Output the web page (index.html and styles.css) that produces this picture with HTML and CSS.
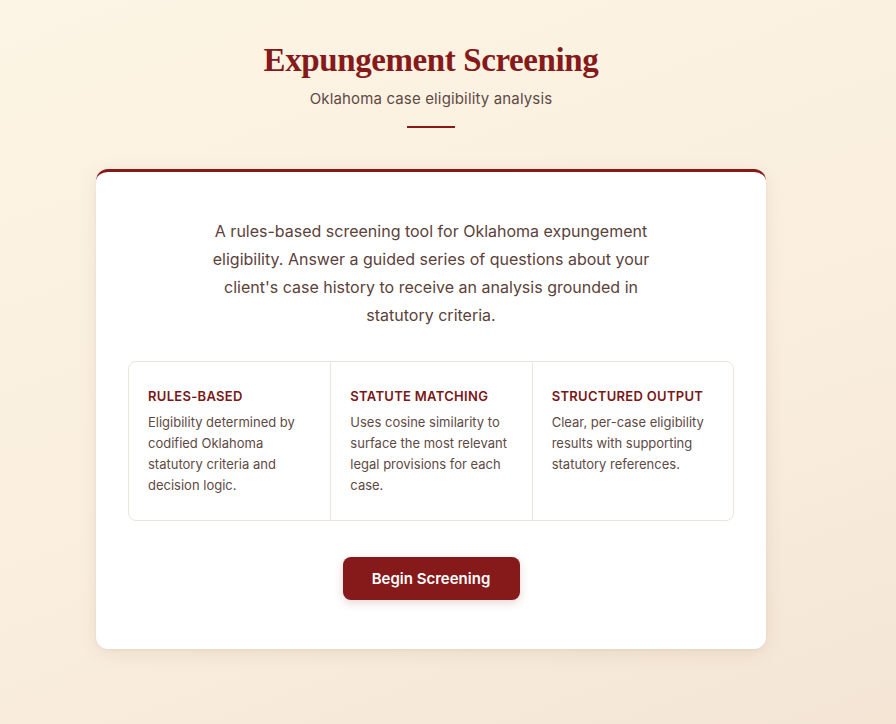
FILE: index.html
```html
<!DOCTYPE html>
<html lang="en">
<head>
<meta charset="utf-8">
<title>Expungement Screening</title>
<link rel="stylesheet" href="styles.css">
</head>
<body>
<div class="page">
  <header class="header">
    <h1 class="title">Expungement Screening</h1>
    <p class="subtitle">Oklahoma case eligibility analysis</p>
    <div class="divider"></div>
  </header>
  <main class="card">
    <p class="intro">A rules-based screening tool for Oklahoma expungement eligibility. Answer a guided series of questions about your client's case history to receive an analysis grounded in statutory criteria.</p>
    <div class="features">
      <div class="feature">
        <h2 class="feature-title">Rules-Based</h2>
        <p class="feature-text">Eligibility determined by codified Oklahoma statutory criteria and decision logic.</p>
      </div>
      <div class="feature">
        <h2 class="feature-title">Statute Matching</h2>
        <p class="feature-text">Uses cosine similarity to surface the most relevant legal provisions for each case.</p>
      </div>
      <div class="feature">
        <h2 class="feature-title">Structured Output</h2>
        <p class="feature-text">Clear, per-case eligibility results with supporting statutory references.</p>
      </div>
    </div>
    <div class="actions">
      <button class="btn" type="button">Begin Screening</button>
    </div>
  </main>
</div>
</body>
</html>
```
FILE: styles.css
```css
* { box-sizing: border-box; }
html, body { margin: 0; padding: 0; }
body {
  min-height: 724px;
  background: linear-gradient(160deg, #fcf4e4 0%, #faefdf 55%, #f4e5d5 100%);
  font-family: Inter, "Noto Sans", sans-serif;
  color: #5b423b;
}
.page {
  display: flex;
  flex-direction: column;
  align-items: center;
  padding-top: 40px;
  padding-right: 34px;
}
.header {
  display: flex;
  flex-direction: column;
  align-items: center;
}
.title {
  margin: 0;
  font-family: "Liberation Serif", "DejaVu Serif", serif;
  font-weight: 700;
  font-size: 33px;
  line-height: 40px;
  color: #861a1a;
  letter-spacing: -0.4px;
}
.subtitle {
  margin: 9px 0 0;
  font-size: 15px;
  line-height: 20px;
  letter-spacing: 0.15px;
  color: #5e4a44;
}
.divider {
  width: 48px;
  height: 2px;
  background: #861a1a;
  margin-top: 17px;
}
.card {
  margin-top: 41px;
  width: 670px;
  background: #fff;
  border-top: 3px solid #861a1a;
  border-radius: 12px;
  box-shadow: 0 4px 18px rgba(120, 80, 40, 0.10), 0 1px 3px rgba(120, 80, 40, 0.06);
  padding: 45px 32px 48px;
}
.intro {
  margin: 0 auto;
  max-width: 450px;
  text-align: center;
  font-size: 16px;
  line-height: 28px;
  color: #5b423b;
}
.features {
  margin-top: 32px;
  display: grid;
  grid-template-columns: repeat(3, 1fr);
  border: 1px solid #eee5da;
  border-radius: 8px;
}
.feature {
  padding: 25px 19px 24px;
  border-left: 1px solid #eee5da;
}
.feature:first-child { border-left: none; }
.feature-title {
  margin: 0;
  font-size: 13px;
  line-height: 18px;
  font-weight: 600;
  text-transform: uppercase;
  letter-spacing: 0.3px;
  color: #7a1717;
}
.feature-text {
  margin: 7px 0 0;
  font-size: 13px;
  line-height: 21px;
  color: #5e4a44;
}
.actions {
  display: flex;
  justify-content: center;
  margin-top: 36px;
}
.btn {
  font-family: Inter, "Noto Sans", sans-serif;
  font-size: 15px;
  font-weight: 600;
  color: #fff;
  background: #861a1a;
  border: none;
  border-radius: 8px;
  width: 177px;
  height: 43px;
  box-shadow: 0 3px 10px rgba(134, 26, 26, 0.18);
  cursor: pointer;
}
.card > .actions:last-child { margin-bottom: 1px; }
```
